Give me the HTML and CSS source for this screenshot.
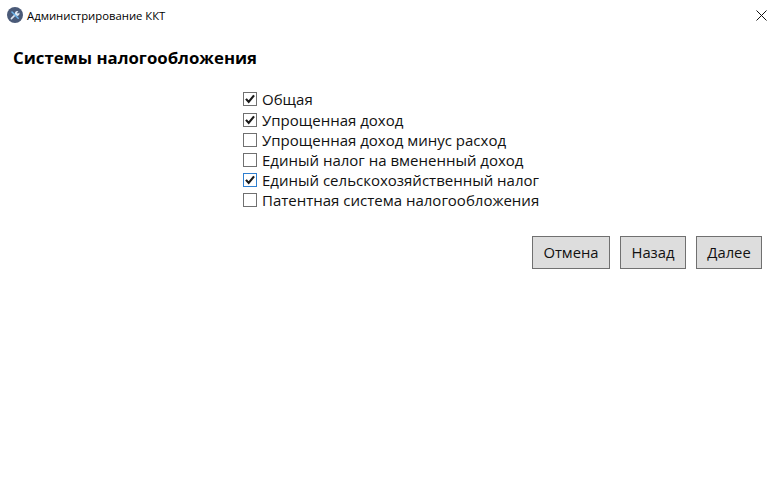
FILE: index.html
```html
<!DOCTYPE html>
<html lang="ru">
<head>
<meta charset="utf-8">
<title>Администрирование ККТ</title>
<link rel="stylesheet" href="styles.css">
</head>
<body>
<div class="window">
  <header class="titlebar">
    <svg class="app-icon" viewBox="0 0 16 16" width="16" height="16" aria-hidden="true">
      <circle cx="8" cy="8" r="8" fill="#4a5a78"/>
      <path d="M4.4 11.6 8.6 7.4" stroke="#dfe8f2" stroke-width="1.6" stroke-linecap="round"/>
      <path d="M8.2 7.8a2.4 2.4 0 0 1 3.2-3.4L10 5.8l.9.9 1.4-1.3a2.4 2.4 0 0 1-3.4 3.1z" fill="#dfe8f2"/>
      <path d="M5 5l6.2 6.2" stroke="#6fb4ea" stroke-width="1.5" stroke-linecap="round"/>
    </svg>
    <span class="title">Администрирование ККТ</span>
    <svg class="close" viewBox="0 0 11 11" width="11" height="11" aria-hidden="true">
      <path d="M.5.5l10 10M10.5.5l-10 10" stroke="#111" stroke-width="1"/>
    </svg>
  </header>
  <h1 class="heading">Системы налогообложения</h1>
  <ul class="options">
    <li class="option"><span class="box checked"><svg viewBox="0 0 11 11"><path d="M1.8 5.4 4.3 8.2 9.2 2.2" fill="none" stroke="#1a1a1a" stroke-width="2"/></svg></span>Общая</li>
    <li class="option"><span class="box checked"><svg viewBox="0 0 11 11"><path d="M1.8 5.4 4.3 8.2 9.2 2.2" fill="none" stroke="#1a1a1a" stroke-width="2"/></svg></span>Упрощенная доход</li>
    <li class="option"><span class="box"></span>Упрощенная доход минус расход</li>
    <li class="option"><span class="box"></span>Единый налог на вмененный доход</li>
    <li class="option"><span class="box checked focus"><svg viewBox="0 0 11 11"><path d="M1.8 5.4 4.3 8.2 9.2 2.2" fill="none" stroke="#1a1a1a" stroke-width="2"/></svg></span>Единый сельскохозяйственный налог</li>
    <li class="option"><span class="box"></span>Патентная система налогообложения</li>
  </ul>
  <div class="actions">
    <button class="btn btn-cancel">Отмена</button>
    <button class="btn btn-back">Назад</button>
    <button class="btn btn-next">Далее</button>
  </div>
</div>
</body>
</html>
```
FILE: styles.css
```css
html, body {
  margin: 0;
  padding: 0;
  background: #fff;
}
.window {
  width: 777px;
  height: 486px;
  overflow: hidden;
  font-family: "Open Sans", "Noto Sans", sans-serif;
  color: #000;
}
.titlebar {
  display: flex;
  align-items: center;
  height: 30px;
  padding: 0 10px 0 7px;
  box-sizing: border-box;
}
.app-icon { flex: none; }
.title {
  margin-left: 4px;
  font-size: 11.3px;
  flex: 1;
}
.close { flex: none; }
.heading {
  margin: 17px 0 0 13px;
  font-size: 16.8px;
  line-height: 22px;
  font-weight: 700;
}
.options {
  list-style: none;
  margin: 20.3px 0 0 243px;
  padding: 0;
}
.option {
  display: flex;
  align-items: center;
  height: 20.2px;
  font-size: 15px;
  color: #111;
}
.box {
  flex: none;
  width: 14px;
  height: 14px;
  margin-right: 5px;
  box-sizing: border-box;
  border: 1px solid #707070;
  background: #fff;
  display: flex;
}
.box svg { width: 12px; height: 12px; }
.box.focus { border-color: #2f7fd0; }
.actions {
  display: flex;
  justify-content: flex-end;
  gap: 10px;
  margin: 25.5px 15px 0 0;
}
.btn {
  height: 33px;
  box-sizing: border-box;
  border: 1px solid #707070;
  border-radius: 0;
  background: #dddddd;
  padding: 0;
  font: 14.8px "Open Sans", "Noto Sans", sans-serif;
  color: #111;
}
.btn-cancel { width: 78px; }
.btn-back { width: 66px; }
.btn-next { width: 66px; }
```
